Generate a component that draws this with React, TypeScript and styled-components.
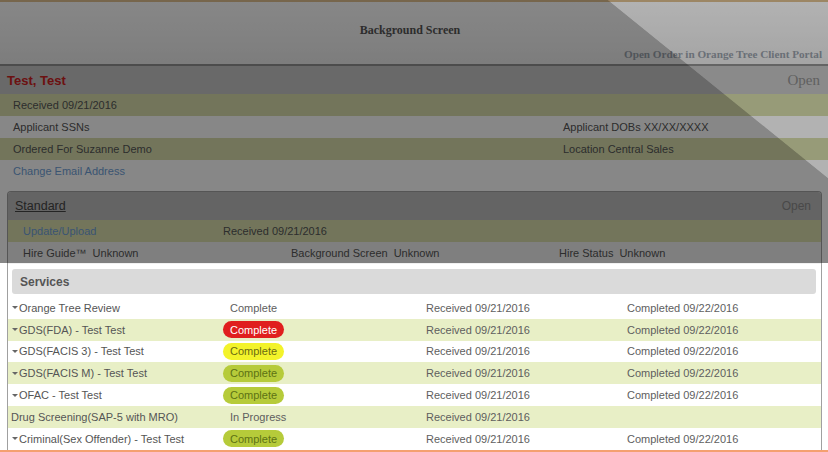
import React from "react";
import styled, { createGlobalStyle } from "styled-components";

const GlobalStyle = createGlobalStyle`
    html, body {
        margin: 0;
        padding: 0;
        background: #ffffff;
        overflow: hidden;
    }
    body {
        font-family: "Liberation Sans", Arial, sans-serif;
        font-size: 11px;
        color: #555555;
    }
`;

const Page = styled.div`
    position: relative;
    width: 828px;
    height: 452px;
    overflow: hidden;
    background: #ffffff;
`;

const Header = styled.header`
    height: 62px;
    border-top: 2px solid #e0c090;
    border-bottom: 2px solid #909090;
    background: linear-gradient(#ffffff, #ececec);
    display: flex;
    flex-direction: column;
    font-family: "Liberation Serif", "Times New Roman", serif;
`;

const Title = styled.h1`
    margin: 0;
    padding: 21px 8px 0 0;
    height: 20px;
    text-align: center;
    font-size: 12px;
    font-weight: 700;
    color: #555555;
`;

const PortalLink = styled.a`
    align-self: flex-end;
    margin-right: 6px;
    margin-top: 5px;
    font-size: 11.2px;
    font-weight: 700;
    color: #98a0aa;
    text-decoration: none;
`;

const OrderBar = styled.div`
    height: 28px;
    display: flex;
    align-items: center;
    justify-content: space-between;
    padding: 0 8px 0 7px;
    background: #c6c6c6;
`;

const OrderName = styled.span`
    font-size: 13px;
    font-weight: 700;
    color: #cc2020;
`;

const OrderStatus = styled.span`
    font-family: "Liberation Serif", "Times New Roman", serif;
    font-size: 15px;
    color: #8a8a8a;
`;

interface ToneProps {
    $tone?: "green" | "plain" | "grey";
}

const rowBg = (tone?: string) =>
    tone === "green" ? "#d9dead" : tone === "grey" ? "#f0f0f0" : "transparent";

const InfoRow = styled.div<ToneProps>`
    height: 22px;
    display: grid;
    grid-template-columns: 550px 1fr;
    align-items: center;
    padding-left: 13px;
    background: ${(p) => rowBg(p.$tone)};
`;

const TextLink = styled.a`
    color: #6f9fd8;
    text-decoration: none;
`;

const Panel = styled.section`
    margin: 9px 6px 0 7px;
    border: 1px solid #a0a0a0;
    border-bottom: none;
    border-radius: 4px 4px 0 0;
`;

const PanelHeader = styled.div`
    height: 28px;
    display: flex;
    align-items: center;
    justify-content: space-between;
    padding: 0 10px 0 7px;
    background: #bdbdbd;
    border-radius: 3px 3px 0 0;
`;

const PanelTitle = styled.span`
    font-size: 12.5px;
    color: #444444;
    text-decoration: underline;
`;

const PanelStatus = styled.span`
    font-size: 12px;
    color: #8a8a8a;
`;

const PanelRow = styled.div<ToneProps & { $cols: string }>`
    height: 22px;
    display: grid;
    grid-template-columns: ${(p) => p.$cols};
    align-items: center;
    padding-left: 15px;
    background: ${(p) => rowBg(p.$tone)};
`;

const Pair = styled.span`
    display: flex;
    gap: 6px;
`;

const Services = styled.div`
    padding-top: 5px;
`;

const ServicesHeader = styled.div`
    height: 25px;
    margin: 0 5px 3px 4px;
    display: flex;
    align-items: center;
    padding-left: 8px;
    background: #dadada;
    border-radius: 3px;
    font-size: 12px;
    font-weight: 700;
    color: #555555;
`;

const ServiceRow = styled.div<{ $striped: boolean }>`
    height: 21.8px;
    display: grid;
    grid-template-columns: 215px 203px 201px 1fr;
    align-items: center;
    background: ${(p) => (p.$striped ? "#e8efc6" : "#ffffff")};
    color: #5e5e5e;
`;

const ServiceName = styled.span<{ $toggle: boolean }>`
    display: flex;
    align-items: center;
    padding-left: ${(p) => (p.$toggle ? "4px" : "3px")};
    color: #555555;
`;

const Caret = styled.span`
    width: 0;
    height: 0;
    margin-right: 1px;
    border-left: 3px solid transparent;
    border-right: 3px solid transparent;
    border-top: 3px solid #666666;
`;

type Badge = "red" | "yellow" | "lime" | "none";

const badgeColors: Record<Badge, [string, string]> = {
    red: ["#e01e1e", "#ffffff"],
    yellow: ["#f3f32a", "#6b6b12"],
    lime: ["#b6cb3a", "#5d7214"],
    none: ["transparent", "#5e5e5e"],
};

const Status = styled.span<{ $badge: Badge }>`
    justify-self: start;
    display: inline-flex;
    align-items: center;
    height: 17px;
    padding: 0 7px;
    border-radius: 9px;
    background: ${(p) => badgeColors[p.$badge][0]};
    color: ${(p) => badgeColors[p.$badge][1]};
`;

const Footer = styled.div`
    height: 2px;
    background: #f4a070;
`;

const Dim = styled.div`
    position: absolute;
    left: 0;
    top: 0;
    width: 828px;
    height: 263px;
    background: rgba(0, 0, 0, 0.47);
    clip-path: polygon(0 0, 608px 0, 828px 178px, 828px 263px, 0 263px);
    pointer-events: none;
`;

const DimLight = styled.div`
    position: absolute;
    left: 0;
    top: 0;
    width: 828px;
    height: 178px;
    background: rgba(0, 0, 0, 0.3);
    clip-path: polygon(608px 0, 828px 0, 828px 178px);
    pointer-events: none;
`;

const services: { name: string; toggle: boolean; status: string; badge: Badge; completed?: string }[] = [
    { name: "Orange Tree Review", toggle: true, status: "Complete", badge: "none", completed: "09/22/2016" },
    { name: "GDS(FDA) - Test Test", toggle: true, status: "Complete", badge: "red", completed: "09/22/2016" },
    { name: "GDS(FACIS 3) - Test Test", toggle: true, status: "Complete", badge: "yellow", completed: "09/22/2016" },
    { name: "GDS(FACIS M) - Test Test", toggle: true, status: "Complete", badge: "lime", completed: "09/22/2016" },
    { name: "OFAC - Test Test", toggle: true, status: "Complete", badge: "lime", completed: "09/22/2016" },
    { name: "Drug Screening(SAP-5 with MRO)", toggle: false, status: "In Progress", badge: "none" },
    { name: "Criminal(Sex Offender) - Test Test", toggle: true, status: "Complete", badge: "lime", completed: "09/22/2016" },
];

export default function App() {
    return (
        <Page>
            <GlobalStyle />
            <Header>
                <Title>Background Screen</Title>
                <PortalLink href="#">Open Order in Orange Tree Client Portal</PortalLink>
            </Header>
            <OrderBar>
                <OrderName>Test, Test</OrderName>
                <OrderStatus>Open</OrderStatus>
            </OrderBar>
            <InfoRow $tone="green">
                <span>Received 09/21/2016</span>
            </InfoRow>
            <InfoRow>
                <span>Applicant SSNs</span>
                <span>Applicant DOBs XX/XX/XXXX</span>
            </InfoRow>
            <InfoRow $tone="green">
                <span>Ordered For Suzanne Demo</span>
                <span>Location Central Sales</span>
            </InfoRow>
            <InfoRow>
                <TextLink href="#">Change Email Address</TextLink>
            </InfoRow>

            <Panel>
                <PanelHeader>
                    <PanelTitle>Standard</PanelTitle>
                    <PanelStatus>Open</PanelStatus>
                </PanelHeader>
                <PanelRow $tone="green" $cols="200px 1fr">
                    <TextLink href="#">Update/Upload</TextLink>
                    <span>Received 09/21/2016</span>
                </PanelRow>
                <PanelRow $tone="grey" $cols="268px 268px 1fr">
                    <Pair>
                        <span>Hire Guide™</span>
                        <span>Unknown</span>
                    </Pair>
                    <Pair>
                        <span>Background Screen</span>
                        <span>Unknown</span>
                    </Pair>
                    <Pair>
                        <span>Hire Status</span>
                        <span>Unknown</span>
                    </Pair>
                </PanelRow>
                <Services>
                    <ServicesHeader>Services</ServicesHeader>
                    {services.map((s, i) => (
                        <ServiceRow key={s.name} $striped={i % 2 === 1}>
                            <ServiceName $toggle={s.toggle}>
                                {s.toggle && <Caret />}
                                {s.name}
                            </ServiceName>
                            <Status $badge={s.badge}>{s.status}</Status>
                            <span>Received 09/21/2016</span>
                            <span>{s.completed ? `Completed ${s.completed}` : ""}</span>
                        </ServiceRow>
                    ))}
                </Services>
            </Panel>
            <Footer />

            <Dim />
            <DimLight />
        </Page>
    );
}
